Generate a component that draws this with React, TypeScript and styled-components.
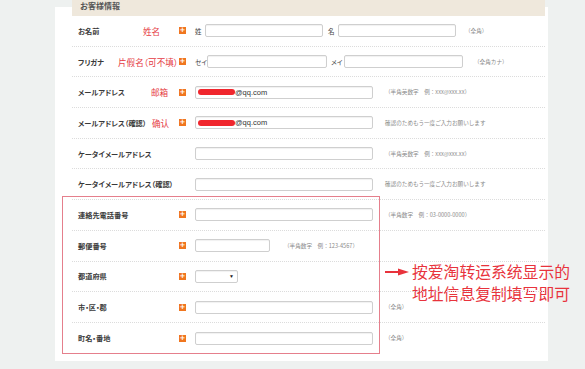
import { createGlobalStyle, styled } from "styled-components";

const GlobalStyle = createGlobalStyle`
  html, body {
    margin: 0;
    padding: 0;
    background: #eef1f0;
  }
  body {
    width: 585px;
    height: 369px;
    overflow: hidden;
    font-family: "Noto Sans CJK JP", "Noto Sans", sans-serif;
  }
`;

const Page = styled.div`
  display: flex;
  padding: 7px 0 0 55px;
  height: 369px;
  box-sizing: border-box;
`;

const Card = styled.div`
  width: 493px;
  height: 354px;
  background: #fff;
  padding: 0 3px 0 17px;
  box-sizing: border-box;
`;

const Header = styled.div`
  height: 16px;
  margin-top: -7px;
  background: #efe8dc;
  display: flex;
  align-items: flex-end;
  padding: 0 0 6px 8px;
  box-sizing: border-box;
  overflow: hidden;
`;

const HeaderText = styled.span`
  font-size: 8px;
  line-height: 8px;
  font-weight: 700;
  color: #555;
  flex-shrink: 0;
`;

const Row = styled.div`
  height: 30.7px;
  display: grid;
  grid-template-columns: 100px 17px 1fr;
  align-items: center;
  padding-left: 6px;
  border-bottom: 1px dotted #dcdcdc;
  box-sizing: border-box;
  position: relative;
  &:last-child {
    border-bottom: none;
  }
`;

const Label = styled.div`
  font-size: 7.2px;
  font-weight: 700;
  color: #3a3a3a;
  font-feature-settings: "palt";
  white-space: nowrap;
  position: relative;
`;

const Annotation = styled.span<{ $left: number }>`
  position: absolute;
  left: ${(p) => p.$left}px;
  top: 50%;
  transform: translateY(-50%);
  font-family: "Noto Sans CJK SC", sans-serif;
  font-size: 8.6px;
  font-weight: 400;
  color: #e53b44;
  font-feature-settings: "palt";
`;

const Required = styled.span`
  width: 7px;
  height: 7px;
  background: #f0761f;
  color: #fff;
  font-size: 7px;
  line-height: 7px;
  text-align: center;
  font-family: "DejaVu Sans", sans-serif;
  font-weight: 700;
  display: block;
  margin-left: 1px;
`;

const Field = styled.div`
  display: flex;
  align-items: center;
  font-size: 7px;
  color: #444;
`;

const Prefix = styled.span<{ $w: number; $ml?: number }>`
  width: ${(p) => p.$w}px;
  margin-left: ${(p) => p.$ml ?? 0}px;
  flex-shrink: 0;
  white-space: nowrap;
  font-size: 6.5px;
  font-feature-settings: "palt";
  color: #444;
`;

const Input = styled.div<{ $w: number }>`
  width: ${(p) => p.$w}px;
  height: 13px;
  flex-shrink: 0;
  border: 1px solid #cfcfcf;
  border-radius: 2px;
  background: #fff;
  box-shadow: inset 0 1px 1px rgba(0, 0, 0, 0.06);
  box-sizing: border-box;
  display: flex;
  align-items: center;
  padding-left: 2px;
  font-family: "Liberation Sans", Arial, sans-serif;
  font-size: 7.5px;
  color: #333;
`;

const Scribble = styled.span`
  width: 37px;
  height: 6px;
  background: #f0262d;
  border-radius: 3px;
`;

const Select = styled(Input)`
  justify-content: flex-end;
  padding-right: 3px;
  font-size: 5px;
  color: #222;
`;

const Note = styled.span<{ $ml: number }>`
  margin-left: ${(p) => p.$ml}px;
  font-size: 5.6px;
  color: #8a8a8a;
  white-space: nowrap;
`;

const Group = styled.div`
  position: relative;
`;

const Outline = styled.div`
  position: absolute;
  left: -10px;
  top: -4px;
  width: 318px;
  bottom: 0;
  border: 1px solid #e57f8c;
  box-sizing: border-box;
  pointer-events: none;
`;

const Callout = styled.div`
  position: absolute;
  left: 313px;
  top: 61px;
  display: flex;
  align-items: flex-start;
  gap: 3px;
`;

const CalloutText = styled.div`
  font-family: "Noto Sans CJK SC", sans-serif;
  font-size: 15.8px;
  line-height: 22px;
  color: #e8333c;
  white-space: nowrap;
`;

function Arrow() {
  return (
    <svg width="24" height="8" viewBox="0 0 24 8" style={{ marginTop: 7 }}>
      <path d="M0 4 H15" stroke="#e8333c" strokeWidth="2" />
      <path d="M13 0.5 L24 4 L13 7.5 Z" fill="#e8333c" />
    </svg>
  );
}

const MAIL_NOTE = "（半角英数字　例：xxx@xxx.xx）";
const CONFIRM_NOTE = "確認のためもう一度ご入力お願いします";

export default function App() {
  return (
    <>
      <GlobalStyle />
      <Page>
        <Card>
          <Header>
            <HeaderText>お客様情報</HeaderText>
          </Header>

          <Row>
            <Label>
              お名前<Annotation $left={65}>姓名</Annotation>
            </Label>
            <Required>+</Required>
            <Field>
              <Prefix $w={10}>姓</Prefix>
              <Input $w={118} />
              <Prefix $w={10} $ml={5}>名</Prefix>
              <Input $w={118} />
              <Note $ml={9}>（全角）</Note>
            </Field>
          </Row>

          <Row>
            <Label>
              フリガナ<Annotation $left={40}>片假名（可不填）</Annotation>
            </Label>
            <Required>+</Required>
            <Field>
              <Prefix $w={12}>セイ</Prefix>
              <Input $w={120} />
              <Prefix $w={13} $ml={4}>メイ</Prefix>
              <Input $w={119} />
              <Note $ml={11}>（全角カナ）</Note>
            </Field>
          </Row>

          <Row>
            <Label>
              メールアドレス<Annotation $left={73}>邮箱</Annotation>
            </Label>
            <Required>+</Required>
            <Field>
              <Input $w={178}>
                <Scribble />@qq.com
              </Input>
              <Note $ml={12}>{MAIL_NOTE}</Note>
            </Field>
          </Row>

          <Row>
            <Label>
              メールアドレス（確認）<Annotation $left={74}>确认</Annotation>
            </Label>
            <Required>+</Required>
            <Field>
              <Input $w={178}>
                <Scribble />@qq.com
              </Input>
              <Note $ml={12}>{CONFIRM_NOTE}</Note>
            </Field>
          </Row>

          <Row>
            <Label>ケータイメールアドレス</Label>
            <span />
            <Field>
              <Input $w={178} />
              <Note $ml={12}>{MAIL_NOTE}</Note>
            </Field>
          </Row>

          <Row>
            <Label>ケータイメールアドレス（確認）</Label>
            <span />
            <Field>
              <Input $w={178} />
              <Note $ml={12}>{CONFIRM_NOTE}</Note>
            </Field>
          </Row>

          <Group>
            <Outline />
            <Callout>
              <Arrow />
              <CalloutText>
                按爱淘转运系统显示的
                <br />
                地址信息复制填写即可
              </CalloutText>
            </Callout>

            <Row>
              <Label>連絡先電話番号</Label>
              <Required>+</Required>
              <Field>
                <Input $w={178} />
                <Note $ml={12}>（半角数字　例：03-0000-0000）</Note>
              </Field>
            </Row>

            <Row>
              <Label>郵便番号</Label>
              <Required>+</Required>
              <Field>
                <Input $w={75} />
                <Note $ml={14}>（半角数字　例：123-4567）</Note>
              </Field>
            </Row>

            <Row>
              <Label>都道府県</Label>
              <Required>+</Required>
              <Field>
                <Select $w={43}>▼</Select>
              </Field>
            </Row>

            <Row>
              <Label>市・区・郡</Label>
              <Required>+</Required>
              <Field>
                <Input $w={178} />
                <Note $ml={12}>（全角）</Note>
              </Field>
            </Row>

            <Row>
              <Label>町名・番地</Label>
              <Required>+</Required>
              <Field>
                <Input $w={178} />
                <Note $ml={12}>（全角）</Note>
              </Field>
            </Row>
          </Group>
        </Card>
      </Page>
    </>
  );
}
